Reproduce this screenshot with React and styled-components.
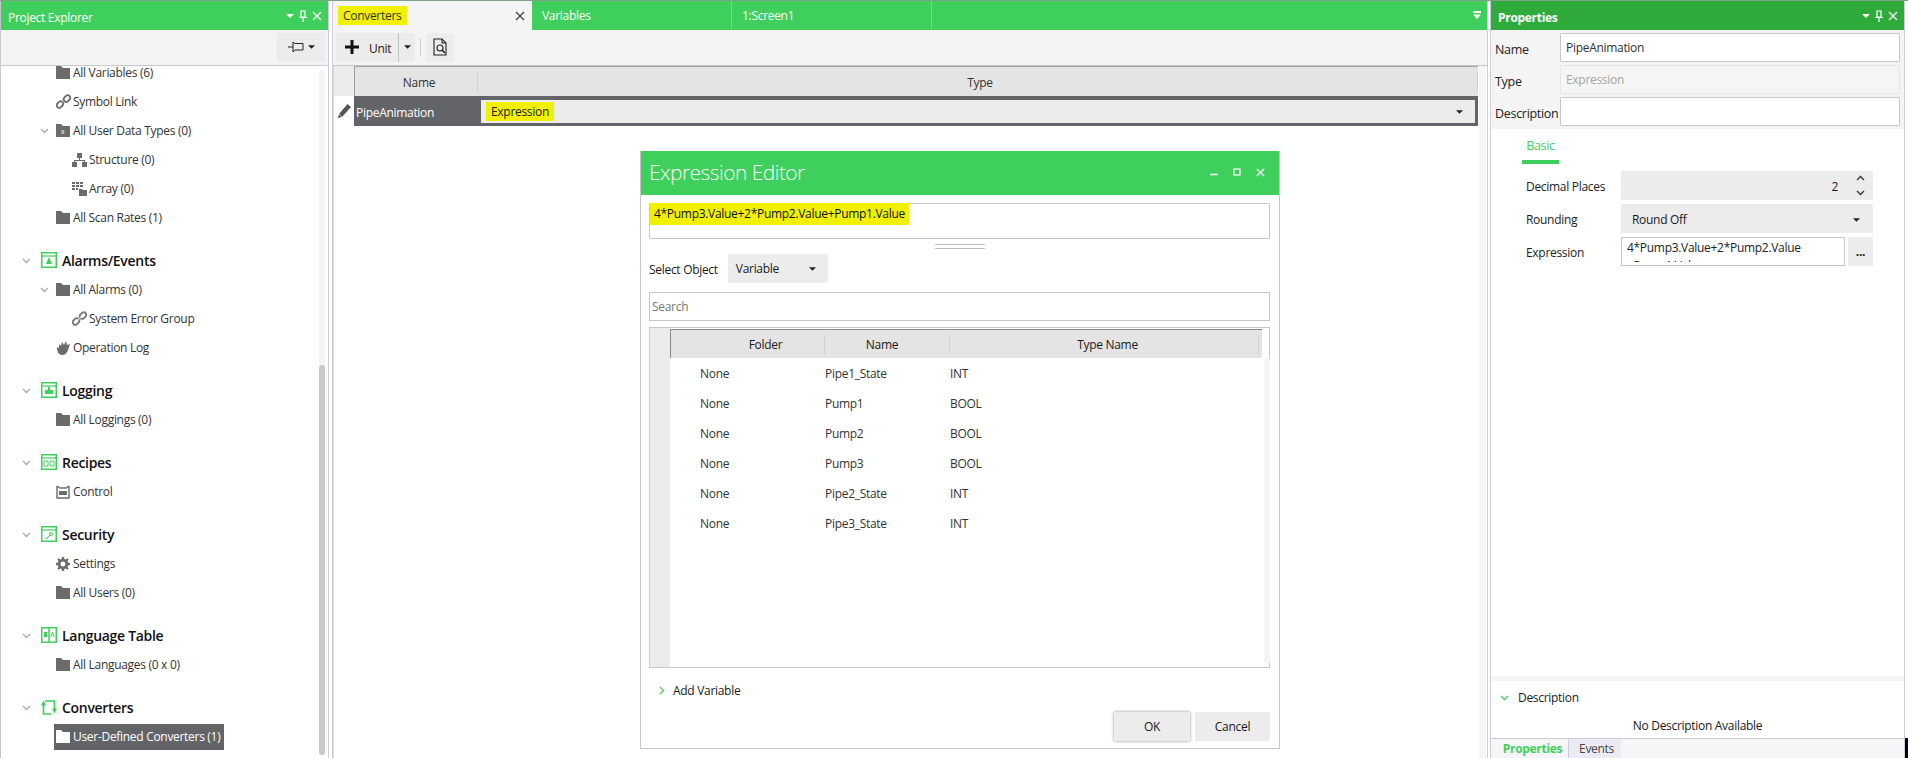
import React from 'react';
import styled, { createGlobalStyle } from 'styled-components';

const GREEN = '#3ecf5c';
const DARK_GREEN = '#2fab3c';
const SELECTED = '#636468';
const LINE = '#c8c8c8';
const FIELD = '#ececec';
const DOCK_LINE = '#cfcbdc';

const GlobalStyle = createGlobalStyle`
  html, body { margin: 0; padding: 0; background: #fff; }
  body {
    font-family: "Open Sans", "Liberation Sans", sans-serif;
    font-size: 12px;
    letter-spacing: -0.3px;
    color: #1a1a1a;
  }
  * { box-sizing: border-box; }
`;

const Page = styled.div`
  position: relative;
  display: flex;
  width: 1908px;
  height: 758px;
  overflow: hidden;
  border-top: 1px solid #7f9f86;
`;

const LeftDock = styled.div`
  width: 329px;
  display: flex;
  flex-direction: column;
  border-left: 1px solid ${LINE};
  border-right: 1px solid ${DOCK_LINE};
`;

const Splitter = styled.div`
  width: 4px;
  border-right: 1px solid ${DOCK_LINE};
`;

const TitleBar = styled.div`
  height: 29px;
  flex: none;
  display: flex;
  align-items: center;
  padding: 0 6px 0 7px;
  color: #fff;
  background: ${p => (p.$active ? DARK_GREEN : GREEN)};
  font-weight: ${p => (p.$active ? 700 : 400)};
`;

const TitleText = styled.span`
  flex: 1;
  padding-top: 3px;
`;

const TitleIcons = styled.span`
  display: flex;
  align-items: center;
  gap: 5px;
`;

const ToolStrip = styled.div`
  height: 36px;
  flex: none;
  display: flex;
  align-items: center;
  background: #f4f4f4;
  border-bottom: 1px solid ${LINE};
  padding: 0 3px 1px;
  justify-content: ${p => (p.$end ? 'flex-end' : 'flex-start')};
`;

const PinButton = styled.div`
  width: 48px;
  height: 29px;
  background: #ececec;
  display: flex;
  align-items: center;
  justify-content: center;
  gap: 4px;
`;

const TreeArea = styled.div`
  position: relative;
  flex: 1;
  overflow: hidden;
`;

const TreeList = styled.div`
  margin-top: -8px;
`;

const Section = styled.div`
  display: flex;
  align-items: center;
  height: 30px;
  margin-top: 13px;
  padding-left: 21px;
  font-size: 14px;
  font-weight: 600;
  color: #111;
`;

const Item = styled.div`
  display: flex;
  align-items: center;
  height: 29px;
  padding-left: ${p => (p.$depth === 2 ? 71 : 55)}px;
  color: #333;
`;

const Caret = styled.span`
  width: ${p => p.$w || 18}px;
  margin-left: ${p => p.$ml || 0}px;
  display: flex;
  align-items: center;
  flex: none;
`;

const IconBox = styled.span`
  width: ${p => p.$w || 17}px;
  flex: none;
  display: flex;
  align-items: center;
`;

const SelectedLabel = styled.div`
  display: flex;
  align-items: center;
  height: 26px;
  margin-left: -2px;
  padding: 0 4px 0 2px;
  background: ${SELECTED};
  color: #fff;
`;

const ScrollTrack = styled.div`
  position: absolute;
  top: 4px;
  bottom: 3px;
  right: 3px;
  width: 6px;
  border-radius: 3px;
  background: #f5f5f5;
`;

const ScrollThumb = styled.div`
  position: absolute;
  top: 295px;
  bottom: 0;
  left: 0;
  right: 0;
  border-radius: 3px;
  background: #c9c9c9;
`;

const Main = styled.div`
  width: 1155px;
  display: flex;
  flex-direction: column;
  position: relative;
  border-right: 1px solid ${DOCK_LINE};
`;

const TabBar = styled.div`
  height: 29px;
  flex: none;
  display: flex;
  background: ${GREEN};
  align-items: stretch;
`;

const DocTab = styled.div`
  width: ${p => p.$w}px;
  display: flex;
  align-items: center;
  padding: 0 6px 0 ${p => (p.$active ? 5 : 10)}px;
  color: ${p => (p.$active ? '#333' : '#fff')};
  background: ${p => (p.$active ? '#f4f4f4' : 'transparent')};
  border-right: 1px solid ${p => (p.$active ? 'transparent' : '#6edc83')};
  justify-content: space-between;
`;

const Marker = styled.span`
  background: #f0f000;
  padding: ${p => p.$pad || '1px 5px'};
`;

const TabFill = styled.div`
  flex: 1;
  display: flex;
  align-items: center;
  justify-content: flex-end;
  padding-right: 5px;
`;

const UnitButton = styled.div`
  width: 79px;
  height: 29px;
  background: #ececec;
  display: flex;
  align-items: center;
  padding-left: 9px;
`;

const UnitLabel = styled.span`
  margin: 2px 0 0 10px;
`;

const UnitDivider = styled.span`
  width: 1px;
  height: 29px;
  background: #c4c4c4;
  margin: 0 5px 0 7px;
`;

const ToolSep = styled.span`
  width: 1px;
  height: 18px;
  margin: 0 5px;
  background: #d0d0d0;
`;

const IconButton = styled.div`
  width: 28px;
  height: 29px;
  background: #ececec;
  display: flex;
  align-items: center;
  justify-content: center;
`;

const GridArea = styled.div`
  flex: 1;
  display: flex;
  background: #fff;
`;

const Gutter = styled.div`
  width: 21px;
  flex: none;
  background: #fff;
  border-left: 1px solid #d8d8d8;
`;

const GutterHead = styled.div`
  height: 30px;
  background: #ececec;
`;

const GutterPencil = styled.div`
  height: 30px;
  display: flex;
  align-items: center;
  justify-content: center;
`;

const GridBody = styled.div`
  width: 1124px;
  flex: none;
`;

const HeadRow = styled.div`
  height: 30px;
  display: flex;
  align-items: center;
  background: #e4e4e4;
  color: #333;
  border-top: 1px solid #a0a0a0;
  border-left: 1px solid #a0a0a0;
`;

const HeadCell = styled.div`
  width: ${p => p.$w}px;
  flex: ${p => (p.$grow ? 1 : 'none')};
  height: 19px;
  display: flex;
  align-items: center;
  justify-content: center;
  padding-left: ${p => p.$pl || 0}px;
  padding-top: 1px;
  border-right: 1px solid #cfcfcf;
`;

const ActiveRow = styled.div`
  height: 30px;
  display: flex;
  align-items: center;
  background: ${SELECTED};
  color: #fff;
  padding: 0 3px 0 2px;
`;

const RowName = styled.div`
  width: 125px;
  flex: none;
  padding-top: 2px;
`;

const RowCombo = styled.div`
  flex: 1;
  height: 23px;
  background: ${FIELD};
  color: #222;
  display: flex;
  align-items: center;
  justify-content: space-between;
  padding: 1px 12px 0 5px;
`;

const GridScroll = styled.div`
  width: 7px;
  margin-left: 1px;
  flex: none;
  background: #f6f6f6;
`;

const Dialog = styled.div`
  position: absolute;
  left: 307px;
  top: 150px;
  width: 640px;
  height: 598px;
  display: flex;
  flex-direction: column;
  background: #fff;
  border: 1px solid ${LINE};
  border-top: 0;
`;

const DialogTitle = styled.div`
  height: 44px;
  flex: none;
  display: flex;
  align-items: center;
  background: ${GREEN};
  color: #fff;
  font-size: 21px;
  font-weight: 300;
  letter-spacing: -0.55px;
  padding: 0 14px 2px 8px;
`;

const DialogTitleText = styled.span`
  flex: 1;
`;

const WinButtons = styled.div`
  display: flex;
  align-items: center;
  gap: 15px;
`;

const DialogBody = styled.div`
  flex: 1;
  display: flex;
  flex-direction: column;
  padding: 8px 9px 7px 8px;
`;

const ExpressionBox = styled.div`
  height: 36px;
  border: 1px solid ${LINE};
  border-radius: 1px;
  padding: 1px 0 0 0;
  line-height: 17px;
  color: #111;
`;

const GripLines = styled.div`
  width: 50px;
  height: 5px;
  margin: 5px auto 5px;
  border-top: 1px solid #bdbdbd;
  border-bottom: 1px solid #bdbdbd;
`;

const ObjectRow = styled.div`
  display: flex;
  align-items: center;
  height: 29px;
  gap: 10px;
`;

const ObjectLabel = styled.span`
  padding-top: 2px;
`;

const SelectBox = styled.div`
  width: 100px;
  height: 29px;
  background: ${FIELD};
  display: flex;
  align-items: center;
  justify-content: space-between;
  padding: 0 12px 0 8px;
`;

const SearchBox = styled.div`
  height: 29px;
  margin-top: 9px;
  border: 1px solid ${LINE};
  display: flex;
  align-items: center;
  padding-left: 2px;
  color: #777;
`;

const Table = styled.div`
  position: relative;
  flex: 1;
  margin-top: 6px;
  display: flex;
  border: 1px solid ${LINE};
`;

const TableGutter = styled.div`
  width: 20px;
  flex: none;
  background: ${FIELD};
`;

const TableMain = styled.div`
  width: 592px;
  flex: none;
  padding-top: 1px;
`;

const TableHead = styled.div`
  height: 29px;
  display: flex;
  align-items: center;
  background: #e4e4e4;
  border-top: 1px solid #8a8a8a;
  border-left: 1px solid #8a8a8a;
`;

const TableHeadCell = styled.div`
  width: ${p => p.$w}px;
  height: 19px;
  flex: none;
  display: flex;
  align-items: center;
  justify-content: center;
  padding: 0 ${p => p.$pr || 0}px 0 ${p => p.$pl || 0}px;
  border-right: 1px solid #cfcfcf;
`;

const TableRow = styled.div`
  height: 30px;
  display: flex;
  align-items: center;
  color: #333;
`;

const TableCell = styled.div`
  width: ${p => p.$w}px;
  flex: none;
  padding-left: ${p => p.$pl || 0}px;
`;

const TableScroll = styled.div`
  width: 6px;
  margin: 30px 0 3px 2px;
  flex: none;
  border-radius: 3px;
  background: #f6f6f6;
`;

const AddRow = styled.div`
  display: flex;
  align-items: center;
  gap: 7px;
  height: 20px;
  margin: 12px 0 0 8px;
`;

const DialogActions = styled.div`
  display: flex;
  justify-content: flex-end;
  gap: 5px;
  margin-top: 12px;
`;

const ActionButton = styled.div`
  width: ${p => p.$w}px;
  height: 29px;
  background: ${FIELD};
  display: flex;
  align-items: center;
  justify-content: center;
  box-shadow: ${p => (p.$default ? '0 0 3px rgba(0,0,0,.45)' : 'none')};
`;

const RightDock = styled.div`
  width: 415px;
  margin-left: 2px;
  display: flex;
  flex-direction: column;
  border-left: 1px solid ${DOCK_LINE};
  border-right: 1px solid ${DOCK_LINE};
  position: relative;
`;

const HeaderFields = styled.div`
  height: 99px;
  flex: none;
  background: #f4f4f4;
  padding: 3px 4px 0 4px;
  display: flex;
  flex-direction: column;
  gap: 3px;
`;

const FieldRow = styled.div`
  display: flex;
  align-items: center;
  height: 29px;
`;

const FieldLabel = styled.div`
  width: 65px;
  flex: none;
  color: #222;
  font-size: 12.5px;
  padding-top: 3px;
`;

const TextBox = styled.div`
  flex: 1;
  height: 29px;
  background: ${p => (p.$disabled ? '#f5f5f5' : '#fff')};
  color: ${p => (p.$disabled ? '#a5a5a5' : '#333')};
  border: 1px solid ${p => (p.$disabled ? '#e6e6e6' : LINE)};
  border-radius: 1px;
  padding: 0 5px 1px;
  display: flex;
  align-items: center;
`;

const BasicTab = styled.div`
  margin: 6px 0 0 31px;
  width: 37px;
  height: 29px;
  flex: none;
  display: flex;
  align-items: center;
  justify-content: center;
  color: ${GREEN};
  font-size: 12.5px;
  padding-bottom: 4px;
  border-bottom: 4px solid ${GREEN};
`;

const PropGrid = styled.div`
  margin: 7px 0 0 35px;
  width: 347px;
  display: flex;
  flex-direction: column;
  gap: 4px;
`;

const PropRow = styled.div`
  display: flex;
  align-items: center;
  height: 29px;
`;

const PropLabel = styled.div`
  width: 95px;
  flex: none;
  color: #222;
  padding-top: 2px;
`;

const PropField = styled.div`
  flex: 1;
  height: 29px;
  background: ${FIELD};
  display: flex;
  align-items: center;
  justify-content: ${p => (p.$between ? 'space-between' : 'flex-end')};
  padding: 2px ${p => (p.$between ? 13 : 8)}px 0 11px;
`;

const SpinArrows = styled.div`
  display: flex;
  flex-direction: column;
  gap: 5px;
  margin: -2px 0 0 18px;
`;

const ClippedInput = styled.div`
  width: 224px;
  height: 29px;
  flex: none;
  border: 1px solid ${LINE};
  padding: 0 5px;
  color: #222;
`;

const ClippedText = styled.div`
  height: 24px;
  overflow: hidden;
  padding-top: 1px;
  line-height: 18px;
`;

const MoreButton = styled.div`
  width: 25px;
  height: 29px;
  margin-left: 3px;
  background: ${FIELD};
  display: flex;
  align-items: center;
  justify-content: center;
  font-weight: 700;
`;

const Spacer = styled.div`
  flex: 1;
`;

const DescBand = styled.div`
  height: 5px;
  flex: none;
  background: #f4f4f4;
`;

const DescHead = styled.div`
  height: 32px;
  flex: none;
  display: flex;
  align-items: center;
  padding-left: 9px;
  gap: 9px;
`;

const DescText = styled.div`
  height: 25px;
  flex: none;
  display: flex;
  align-items: center;
  justify-content: center;
`;

const BottomTabs = styled.div`
  height: 20px;
  flex: none;
  display: flex;
  background: #f6f6f8;
  border-top: 1px solid ${DOCK_LINE};
`;

const BottomTab = styled.div`
  width: ${p => p.$w}px;
  display: flex;
  align-items: center;
  justify-content: center;
  padding-left: ${p => (p.$active ? 6 : 3)}px;
  background: ${p => (p.$active ? '#f6f6f8' : '#ecebf3')};
  color: ${p => (p.$active ? GREEN : '#444')};
  font-weight: ${p => (p.$active ? 700 : 400)};
  border-right: ${p => (p.$active ? `1px solid ${DOCK_LINE}` : '0')};
`;

const BlackCorner = styled.div`
  position: absolute;
  right: 0;
  bottom: 0;
  width: 3px;
  height: 20px;
  background: #000;
`;

const Folder = ({ fill = '#6b6b6b', x }) => (
  <svg width="14" height="13" viewBox="0 0 14 13">
    <path d="M0 0h5l2 2h7v11H0z" fill={fill} />
    {x && <text x="5" y="10" fontSize="7" fill="#fff" fontFamily="Liberation Sans">x</text>}
  </svg>
);

const LinkIcon = ({ broken }) => (
  <svg width="15" height="15" viewBox="0 0 15 15" fill="none" stroke={broken ? '#777' : '#6b6b6b'} strokeWidth="1.8">
    <rect x="0.5" y="8" width="7" height="5" rx="2.4" transform="rotate(-45 4 10.5)" />
    <rect x="7.5" y="2" width="7" height="5" rx="2.4" transform="rotate(-45 11 4.5)" />
    {broken && <path d="M5 10l5-5" stroke="#fff" strokeWidth="1" />}
  </svg>
);

const TreeOrg = () => (
  <svg width="15" height="14" viewBox="0 0 15 14" fill="#6b6b6b">
    <rect x="5" y="0" width="5" height="5" />
    <rect x="0" y="9" width="5" height="5" />
    <rect x="10" y="9" width="5" height="5" />
    <path d="M7 5h1v2h5v2h-1V8H3v1H2V7h5z" />
  </svg>
);

const ArrayIcon = () => (
  <svg width="15" height="14" viewBox="0 0 15 14" fill="#6b6b6b">
    <path d="M0 0h3v2H0zM4 0h3v2H4zM8 0h3v2H8zM0 3h3v2H0zM4 3h3v2H4zM8 3h3v2H8zM0 6h3v2H0zM4 6h2v2H4z" />
    <path d="M7 7h3l1 1h4v6H7z" />
  </svg>
);

const HandIcon = () => (
  <svg width="15" height="14" viewBox="0 0 15 14" fill="#6b6b6b">
    <path d="M1 6l2 1V3l2 2 1-4 2 3 2-4 1 4 3-1-2 6c-1 3-3 5-6 5S1 11 1 6z" />
  </svg>
);

const ControlIcon = () => (
  <svg width="14" height="14" viewBox="0 0 14 14" fill="none" stroke="#6b6b6b" strokeWidth="1.4">
    <path d="M1 1v12h12V1M1 1l3 2h6l3-2" />
    <rect x="3" y="6" width="8" height="4" fill="#6b6b6b" stroke="none" />
  </svg>
);

const GearIcon = () => (
  <svg width="14" height="14" viewBox="0 0 14 14">
    <path
      fill="#6b6b6b"
      fillRule="evenodd"
      d="M6 0h2l.4 2 1.3.5L11.4 1.3 12.7 2.6 11.5 4.3 12 5.6l2 .4v2l-2 .4-.5 1.3 1.2 1.7-1.3 1.3-1.7-1.2-1.3.5L8 14H6l-.4-2-1.3-.5-1.7 1.2-1.3-1.3 1.2-1.7L2 8.4 0 8V6l2-.4.5-1.3L1.3 2.6 2.6 1.3l1.7 1.2L5.6 2zM7 4.5a2.5 2.5 0 1 0 0 5 2.5 2.5 0 0 0 0-5z"
    />
  </svg>
);

const SectionIcon = ({ children }) => (
  <svg width="16" height="16" viewBox="0 0 16 16" fill="none">
    <rect x="0.75" y="0.75" width="14.5" height="14.5" stroke={GREEN} strokeWidth="1.5" fill="#fff" />
    <path d="M1 4h14" stroke={GREEN} strokeWidth="1.2" />
    {children}
  </svg>
);

const ConvertIcon = () => (
  <svg width="16" height="16" viewBox="0 0 16 16" fill="none" stroke={GREEN} strokeWidth="1.7">
    <path d="M4 2h9.500v8" />
    <path d="M2.500 6v9h8" />
    <path d="M0 6.500L2.500 1.500l2.500 5z" fill={GREEN} stroke="none" />
    <path d="M11 9.500l2.500 5 2.500-5z" fill={GREEN} stroke="none" />
  </svg>
);

const Chevron = ({ color = '#aaa', dir = 'down', size = 9 }) => (
  <svg width={size} height={size} viewBox="0 0 9 9" fill="none" stroke={color} strokeWidth="1.3">
    {dir === 'down' && <path d="M1 3l3.5 3.5L8 3" />}
    {dir === 'up' && <path d="M1 6l3.5-3.5L8 6" />}
    {dir === 'right' && <path d="M3 1l3.5 3.5L3 8" />}
  </svg>
);

const TriangleDown = ({ color = '#222', w = 8, h = 4 }) => (
  <svg width={w} height={h} viewBox="0 0 8 4">
    <path d="M0 0h8L4 4z" fill={color} />
  </svg>
);

const CloseX = ({ color = '#fff', size = 10, sw = 1.3 }) => (
  <svg width={size} height={size} viewBox="0 0 10 10" stroke={color} strokeWidth={sw} fill="none">
    <path d="M1 1l8 8M9 1l-8 8" />
  </svg>
);

const PinSmall = () => (
  <svg width="8" height="12" viewBox="0 0 8 12" fill="none" stroke="#fff" strokeWidth="1.2">
    <path d="M2 1h4v6H2zM0 7.5h8M4 8v4" />
  </svg>
);

const DockIcons = () => (
  <TitleIcons>
    <TriangleDown color="#fff" />
    <PinSmall />
    <CloseX />
  </TitleIcons>
);

const PinSideways = () => (
  <svg width="16" height="12" viewBox="0 0 16 12" fill="none" stroke="#222" strokeWidth="1">
    <path d="M0 6h5M5 1v10l2-2h8V2.5H7z" />
  </svg>
);

const Plus = () => (
  <svg width="14" height="14" viewBox="0 0 14 14">
    <path d="M5.5 0h3v5.5H14v3H8.5V14h-3V8.5H0v-3h5.5z" fill="#111" />
  </svg>
);

const DocSearch = () => (
  <svg width="14" height="18" viewBox="0 0 14 18" fill="none" stroke="#222" strokeWidth="1.1">
    <path d="M1 1h8l4 4v12H1z" />
    <path d="M9 1v4h4" />
    <circle cx="7" cy="10" r="3" />
    <path d="M9 12l3 3" strokeWidth="1.6" />
  </svg>
);

const Pencil = ({ color = '#555' }) => (
  <svg width="13" height="14" viewBox="0 0 13 14">
    <path d="M9.5 0L13 3 4 13 0 14l1-4z" fill={color} />
    <path d="M1 10l3 3" stroke="#fff" strokeWidth=".6" />
  </svg>
);

const WinMin = () => (
  <svg width="8" height="8" viewBox="0 0 8 8"><path d="M0 6.5h8" stroke="#fff" strokeWidth="1.4" /></svg>
);

const WinMax = () => (
  <svg width="8" height="8" viewBox="0 0 8 8"><rect x="1" y="1" width="6" height="6" stroke="#fff" strokeWidth="1.2" fill="none" /></svg>
);

const DoubleDown = () => (
  <svg width="10" height="10" viewBox="0 0 10 10" fill="#fff">
    <path d="M1 0h8v2H1zM1 3.5h8L5 8z" />
  </svg>
);

const TreeRow = ({ depth = 1, icon, caret, children }) => (
  <Item $depth={depth}>
    {caret ? (
      <Caret $w={16} $ml={-16}><Chevron /></Caret>
    ) : null}
    <IconBox>{icon}</IconBox>
    {children}
  </Item>
);

const TreeSection = ({ icon, children }) => (
  <Section>
    <Caret $w={19}><Chevron /></Caret>
    <IconBox $w={21}>{icon}</IconBox>
    {children}
  </Section>
);

const variables = [
  ['None', 'Pipe1_State', 'INT'],
  ['None', 'Pump1', 'BOOL'],
  ['None', 'Pump2', 'BOOL'],
  ['None', 'Pump3', 'BOOL'],
  ['None', 'Pipe2_State', 'INT'],
  ['None', 'Pipe3_State', 'INT'],
];

export default function App() {
  return (
    <>
      <GlobalStyle />
      <Page>
        <LeftDock>
          <TitleBar>
            <TitleText>Project Explorer</TitleText>
            <DockIcons />
          </TitleBar>
          <ToolStrip $end>
            <PinButton>
              <PinSideways />
              <TriangleDown w={7} />
            </PinButton>
          </ToolStrip>
          <TreeArea>
            <TreeList>
              <TreeRow icon={<Folder />}>All Variables (6)</TreeRow>
              <TreeRow icon={<LinkIcon />}>Symbol Link</TreeRow>
              <TreeRow caret icon={<Folder x />}>All User Data Types (0)</TreeRow>
              <TreeRow depth={2} icon={<TreeOrg />}>Structure (0)</TreeRow>
              <TreeRow depth={2} icon={<ArrayIcon />}>Array (0)</TreeRow>
              <TreeRow icon={<Folder />}>All Scan Rates (1)</TreeRow>

              <TreeSection icon={<SectionIcon><path d="M8 5l3 7H5z" fill={GREEN} /></SectionIcon>}>Alarms/Events</TreeSection>
              <TreeRow caret icon={<Folder />}>All Alarms (0)</TreeRow>
              <TreeRow depth={2} icon={<LinkIcon broken />}>System Error Group</TreeRow>
              <TreeRow icon={<HandIcon />}>Operation Log</TreeRow>

              <TreeSection icon={<SectionIcon><path d="M4 8h8v4H4zM7 5h2v3H7z" fill={GREEN} /></SectionIcon>}>Logging</TreeSection>
              <TreeRow icon={<Folder />}>All Loggings (0)</TreeRow>

              <TreeSection icon={<SectionIcon><path d="M3 7h4v5H3zM9 7h4v5H9z" stroke={GREEN} /></SectionIcon>}>Recipes</TreeSection>
              <TreeRow icon={<ControlIcon />}>Control</TreeRow>

              <TreeSection icon={<SectionIcon><circle cx="10" cy="8" r="1.5" stroke={GREEN} /><path d="M9 9l-4 4" stroke={GREEN} /></SectionIcon>}>Security</TreeSection>
              <TreeRow icon={<GearIcon />}>Settings</TreeRow>
              <TreeRow icon={<Folder />}>All Users (0)</TreeRow>

              <TreeSection
                icon={
                  <svg width="16" height="16" viewBox="0 0 16 16" fill="none">
                    <rect x=".75" y=".75" width="14.5" height="14.5" stroke={GREEN} strokeWidth="1.5" />
                    <path d="M8 1v14" stroke={GREEN} strokeWidth="1.5" />
                    <path d="M3 5h3v5H3z" fill={GREEN} />
                    <path d="M10 10l1.5-5L13 10" stroke={GREEN} />
                  </svg>
                }
              >
                Language Table
              </TreeSection>
              <TreeRow icon={<Folder />}>All Languages (0 x 0)</TreeRow>

              <TreeSection icon={<ConvertIcon />}>Converters</TreeSection>
              <Item $depth={1}>
                <SelectedLabel>
                  <IconBox><Folder fill="#fff" /></IconBox>
                  User-Defined Converters (1)
                </SelectedLabel>
              </Item>
            </TreeList>
            <ScrollTrack><ScrollThumb /></ScrollTrack>
          </TreeArea>
        </LeftDock>
        <Splitter />
        <Main>
          <TabBar>
            <DocTab $active $w={199}>
              <Marker $pad="1px 6px 1px 5px">Converters</Marker>
              <CloseX color="#444" />
            </DocTab>
            <DocTab $w={200}>Variables</DocTab>
            <DocTab $w={200}>1:Screen1</DocTab>
            <TabFill><DoubleDown /></TabFill>
          </TabBar>
          <ToolStrip>
            <UnitButton>
              <Plus />
              <UnitLabel>Unit</UnitLabel>
              <UnitDivider />
              <TriangleDown w={7} />
            </UnitButton>
            <ToolSep />
            <IconButton><DocSearch /></IconButton>
          </ToolStrip>
          <GridArea>
            <Gutter>
              <GutterHead />
              <GutterPencil><Pencil /></GutterPencil>
            </Gutter>
            <GridBody>
              <HeadRow>
                <HeadCell $w={123} $pl={6}>Name</HeadCell>
                <HeadCell $grow $pl={5}>Type</HeadCell>
              </HeadRow>
              <ActiveRow>
                <RowName>PipeAnimation</RowName>
                <RowCombo>
                  <Marker $pad="1px 5px">Expression</Marker>
                  <TriangleDown w={7} />
                </RowCombo>
              </ActiveRow>
            </GridBody>
            <GridScroll />
          </GridArea>
          <Dialog>
            <DialogTitle>
              <DialogTitleText>Expression Editor</DialogTitleText>
              <WinButtons>
                <WinMin />
                <WinMax />
                <CloseX size={9} sw={1.5} />
              </WinButtons>
            </DialogTitle>
            <DialogBody>
              <ExpressionBox>
                <Marker $pad="2px 4px 3px">4*Pump3.Value+2*Pump2.Value+Pump1.Value</Marker>
              </ExpressionBox>
              <GripLines />
              <ObjectRow>
                <ObjectLabel>Select Object</ObjectLabel>
                <SelectBox>
                  Variable
                  <TriangleDown w={7} />
                </SelectBox>
              </ObjectRow>
              <SearchBox>Search</SearchBox>
              <Table>
                <TableGutter />
                <TableMain>
                  <TableHead>
                    <TableHeadCell $w={154} $pl={36}>Folder</TableHeadCell>
                    <TableHeadCell $w={125} $pr={10}>Name</TableHeadCell>
                    <TableHeadCell $w={309} $pl={7}>Type Name</TableHeadCell>
                  </TableHead>
                  {variables.map(([folder, name, type], i) => (
                    <TableRow key={i}>
                      <TableCell $w={155} $pl={30}>{folder}</TableCell>
                      <TableCell $w={125}>{name}</TableCell>
                      <TableCell $w={100}>{type}</TableCell>
                    </TableRow>
                  ))}
                </TableMain>
                <TableScroll />
              </Table>
              <AddRow>
                <Chevron color={GREEN} dir="right" />
                Add Variable
              </AddRow>
              <DialogActions>
                <ActionButton $default $w={76}>OK</ActionButton>
                <ActionButton $w={75}>Cancel</ActionButton>
              </DialogActions>
            </DialogBody>
          </Dialog>
        </Main>
        <RightDock>
          <TitleBar $active>
            <TitleText>Properties</TitleText>
            <DockIcons />
          </TitleBar>
          <HeaderFields>
            <FieldRow>
              <FieldLabel>Name</FieldLabel>
              <TextBox>PipeAnimation</TextBox>
            </FieldRow>
            <FieldRow>
              <FieldLabel>Type</FieldLabel>
              <TextBox $disabled>Expression</TextBox>
            </FieldRow>
            <FieldRow>
              <FieldLabel>Description</FieldLabel>
              <TextBox />
            </FieldRow>
          </HeaderFields>
          <BasicTab>Basic</BasicTab>
          <PropGrid>
            <PropRow>
              <PropLabel>Decimal Places</PropLabel>
              <PropField>
                2
                <SpinArrows>
                  <Chevron color="#333" dir="up" />
                  <Chevron color="#333" dir="down" />
                </SpinArrows>
              </PropField>
            </PropRow>
            <PropRow>
              <PropLabel>Rounding</PropLabel>
              <PropField $between>
                Round Off
                <TriangleDown w={7} />
              </PropField>
            </PropRow>
            <PropRow>
              <PropLabel>Expression</PropLabel>
              <ClippedInput>
                <ClippedText>4*Pump3.Value+2*Pump2.Value +Pump1.Value</ClippedText>
              </ClippedInput>
              <MoreButton>...</MoreButton>
            </PropRow>
          </PropGrid>
          <Spacer />
          <DescBand />
          <DescHead>
            <Chevron color={GREEN} />
            Description
          </DescHead>
          <DescText>No Description Available</DescText>
          <BottomTabs>
            <BottomTab $active $w={78}>Properties</BottomTab>
            <BottomTab $w={52}>Events</BottomTab>
          </BottomTabs>
        </RightDock>
        <BlackCorner />
      </Page>
    </>
  );
}
